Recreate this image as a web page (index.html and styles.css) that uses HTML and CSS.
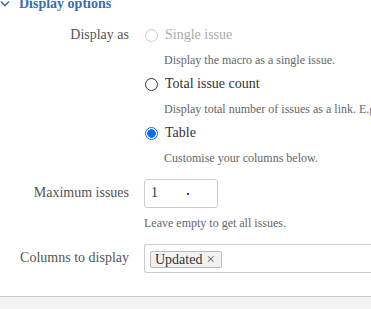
FILE: index.html
```html
<!DOCTYPE html>
<html lang="en">
<head>
    <meta charset="UTF-8">
    <title>Display options</title>
    <link rel="stylesheet" href="styles.css">
</head>
<body>
    <div class="panel">
        <h3 class="section-title">
            <svg class="chevron" width="10" height="8" viewBox="0 0 10 8"><path d="M1 1.5 5 5.5 9 1.5" stroke="#4a6fa5" stroke-width="1.6" fill="none"/></svg>
            Display options
        </h3>
        <div class="row row-first">
            <div class="label">Display as</div>
            <div class="field">
                <label class="radio disabled"><span class="dot"></span>Single issue</label>
                <div class="help">Display the macro as a single issue.</div>
                <label class="radio"><span class="dot"></span>Total issue count</label>
                <div class="help">Display total number of issues as a link. E.g. 20 issues</div>
                <label class="radio"><span class="dot checked"></span>Table</label>
                <div class="help">Customise your columns below.</div>
            </div>
        </div>
        <div class="row">
            <div class="label label-input">Maximum issues</div>
            <div class="field">
                <div class="input">1<span class="cursor"></span></div>
                <div class="help">Leave empty to get all issues.</div>
            </div>
        </div>
        <div class="row row-last">
            <div class="label label-input">Columns to display</div>
            <div class="field">
                <div class="select"><span class="tag">Updated<span class="x">&times;</span></span></div>
            </div>
        </div>
    </div>
    <div class="footer"></div>
</body>
</html>
```
FILE: styles.css
```css
body {
    margin: 0;
    font-family: "Liberation Serif", "Times New Roman", "DejaVu Serif", serif;
    background: #fff;
    color: #333;
    overflow: hidden;
}
.panel {
    height: 296px;
    overflow: hidden;
}
.section-title {
    margin: -4px 0 0 0;
    font-size: 14px;
    line-height: 16px;
    font-weight: bold;
    color: #3b6cb4;
    display: flex;
    align-items: center;
    gap: 9px;
}
.row {
    display: flex;
    margin-top: 7px;
}
.row-first {
    margin-top: 13px;
}
.row-last {
    margin-top: 14px;
}
.label {
    width: 129px;
    text-align: right;
    font-size: 14px;
    line-height: 20px;
    color: #555;
    flex-shrink: 0;
}
.label-input {
    padding-top: 4px;
}
.field {
    margin-left: 15px;
    flex: 1;
    white-space: nowrap;
    overflow: hidden;
}
.radio {
    display: flex;
    align-items: center;
    font-size: 14px;
    line-height: 20px;
    color: #333;
    height: 20px;
}
.radio.disabled {
    color: #aaa;
}
.dot {
    width: 11px;
    height: 11px;
    border: 1px solid #333;
    border-radius: 50%;
    margin: 0 7px 0 1px;
    box-sizing: content-box;
}
.disabled .dot {
    border-color: #ccc;
}
.dot.checked {
    border-color: #0b6cf0;
    background: radial-gradient(circle, #0b6cf0 0 4px, #fff 4.5px);
}
.help {
    font-size: 12px;
    line-height: 14px;
    color: #666;
    margin: 8px 0 7px 20px;
}
.input {
    width: 74px;
    height: 29px;
    box-sizing: border-box;
    border: 1px solid #ccc;
    border-radius: 3px;
    font-size: 14px;
    line-height: 18px;
    padding: 4px 6px;
    position: relative;
}
.cursor {
    position: absolute;
    left: 42px;
    top: 13px;
    width: 2px;
    height: 2px;
    background: #1a3cff;
}
.input + .help {
    margin: 8px 0 0 0;
}
.select {
    height: 29px;
    box-sizing: border-box;
    border: 1px solid #ccc;
    border-right: none;
    border-radius: 3px 0 0 3px;
    padding: 5px 5px;
}
.tag {
    display: inline-block;
    font-size: 14px;
    line-height: 15px;
    border: 1px solid #bbb;
    border-radius: 2px;
    background: #f2f2f2;
    padding: 0 6px 0 4px;
    color: #333;
}
.x {
    font-size: 15px;
    margin-left: 4px;
    color: #555;
}
.footer {
    border-top: 1px solid #ccc;
    background: #f3f3f3;
    height: 20px;
}
```
